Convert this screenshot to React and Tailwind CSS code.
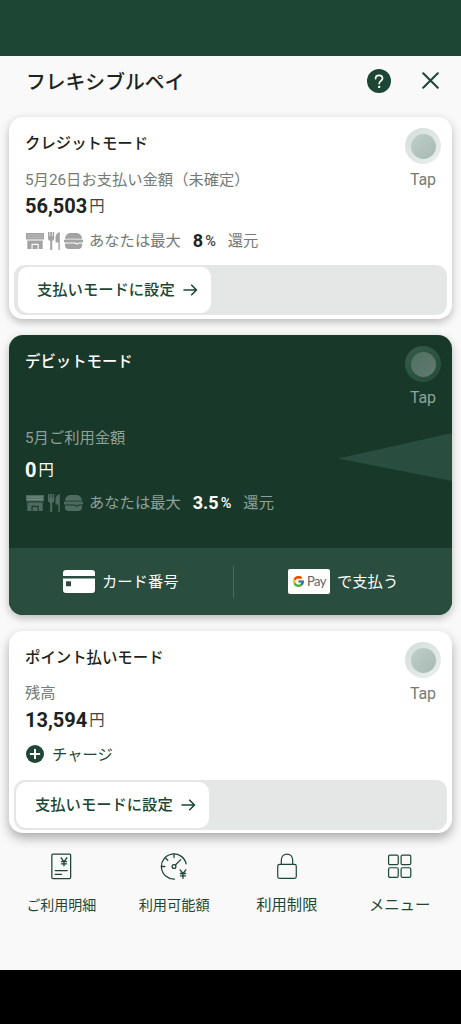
import { FcGoogle } from 'react-icons/fc';
import clsx from 'clsx';

const StoreIcon = () => (
  <svg width="18" height="16" viewBox="0 0 18 16" fill="currentColor">
    <path d="M0 0h18v6.500H0z"/>
    <path d="M1 2.100h16M1 4.400h16" stroke="white" strokeOpacity="0.300" strokeWidth="0.900"/>
    <path d="M1.300 7.500h15.400V16h-4v-5.200H5.500V16H1.300z"/>
    <path d="M6.600 12h5V16h-5z"/>
  </svg>
);

const CutleryIcon = () => (
  <svg width="12" height="18" viewBox="0 0 12 18" fill="currentColor">
    <path d="M0 0h1.500v4h.7V0h1.800v4h.7V0h1.500v6c0 1.700-.8 2.600-2 3V18H2.200V9C.9 8.600 0 7.700 0 6z"/>
    <path d="M11.800 0v18h-1.400v-7.500H7.500V5.500C7.500 2.500 9.500.5 11.800 0z"/>
  </svg>
);

const BurgerIcon = () => (
  <svg width="19" height="16" viewBox="0 0 19 16" fill="currentColor">
    <path d="M1 5.800C1 2.500 3.500 0 6.500 0h6C15.500 0 18 2.500 18 5.800z"/>
    <path d="M1.300 6.500h16.400a1.300 1.300 0 0 1 0 3h-3l-1.700 1-1.700-1h-10a1.300 1.300 0 0 1 0-3z"/>
    <path d="M1 10.500h9.700l2.300 1.300 2.300-1.300H18v2c0 2-1.500 3.500-3.500 3.500h-10C2.500 16 1 14.500 1 12.500z"/>
  </svg>
);

const HelpIcon = () => (
  <svg width="24" height="24" viewBox="0 0 24 24" fill="none">
    <circle cx="12" cy="12" r="12" fill="#1d4734"/>
    <path d="M8.600 9.600C8.600 7.500 10 6.300 12 6.300s3.500 1.200 3.500 3.100c0 2.400-3.300 2.700-3.300 5.200" stroke="white" strokeWidth="1.700" strokeLinecap="round"/>
    <circle cx="12.200" cy="17.900" r="1.200" fill="white"/>
  </svg>
);

const CloseIcon = () => (
  <svg width="17" height="17" viewBox="0 0 17 17" fill="none" stroke="#1d4734" strokeWidth="2" strokeLinecap="round">
    <path d="M1.200 1.200l14.600 14.600M15.800 1.200L1.200 15.800"/>
  </svg>
);

const ArrowIcon = () => (
  <svg width="15" height="12" viewBox="0 0 15 12" fill="none" stroke="currentColor" strokeWidth="1.600" strokeLinecap="round" strokeLinejoin="round">
    <path d="M1 6h12.500M8.700 1.200L13.500 6l-4.800 4.800"/>
  </svg>
);

const PlusIcon = () => (
  <svg width="18" height="18" viewBox="0 0 18 18">
    <circle cx="9" cy="9" r="9" fill="#1d4734"/>
    <path d="M9 4.700v8.600M4.700 9h8.600" stroke="white" strokeWidth="2" strokeLinecap="round"/>
  </svg>
);

const CardIcon = () => (
  <svg width="32" height="23" viewBox="0 0 32 23">
    <path d="M3 0h26a3 3 0 0 1 3 3v3H0V3a3 3 0 0 1 3-3z" fill="white"/>
    <path d="M0 8.500h32V20a3 3 0 0 1-3 3H3a3 3 0 0 1-3-3z" fill="white"/>
    <rect x="3" y="11.300" width="5" height="5" rx="0.600" fill="#294d3e"/>
  </svg>
);

const StatementIcon = () => (
  <svg width="28" height="28" viewBox="0 0 28 28" fill="none" stroke="currentColor" strokeWidth="1.300" strokeLinecap="round" strokeLinejoin="round">
    <rect x="4.500" y="1.200" width="19.500" height="25.300" rx="1.200"/>
    <path d="M14.200 5l2.900 4.200L20 5M17.100 9.200v4M14.500 9h5.200M14.500 11.200h5.200" strokeWidth="1.400"/>
    <path d="M8 18.200h12.500M8 22.200h6.500"/>
  </svg>
);

const LimitIcon = () => (
  <svg width="28" height="28" viewBox="0 0 28 28" fill="none" stroke="currentColor" strokeWidth="1.300" strokeLinecap="round" strokeLinejoin="round">
    <path d="M14.500 27A13 13 0 1 1 26.600 11.200"/>
    <path d="M14 1.200v3.500M1 14h3.500M5.200 5.200l2.300 2.300M15.500 12.400l5.500-5.500"/>
    <circle cx="14" cy="14" r="2"/>
    <path d="M20.400 17.500l2.900 3.900 2.900-3.900M23.300 21.400v4.800M20.700 21.300h5.200M20.700 23.700h5.200" strokeWidth="1.400"/>
  </svg>
);

const LockIcon = () => (
  <svg width="28" height="28" viewBox="0 0 28 28" fill="none" stroke="currentColor" strokeWidth="1.300">
    <rect x="4" y="12.300" width="20" height="15" rx="2"/>
    <path d="M7.900 12.300V7.200a6.100 6.100 0 0 1 12.200 0v5.100"/>
  </svg>
);

const MenuIcon = () => (
  <svg width="28" height="28" viewBox="0 0 28 28" fill="none" stroke="currentColor" strokeWidth="1.300">
    <rect x="1.700" y="2.200" width="10.400" height="10.400" rx="1.500"/>
    <rect x="15.200" y="2.200" width="10.400" height="10.400" rx="1.500"/>
    <rect x="1.700" y="15.900" width="10.400" height="10.400" rx="1.500"/>
    <rect x="15.200" y="15.900" width="10.400" height="10.400" rx="1.500"/>
  </svg>
);

const navItems = [
  { label: 'ご利用明細', icon: StatementIcon, className: 'mt-[13px] text-[14px]' },
  { label: '利用可能額', icon: LimitIcon, className: 'mt-[13px] text-[14.200px]' },
  { label: '利用制限', icon: LockIcon, className: 'mt-[14px] text-[15.300px]' },
  { label: 'メニュー', icon: MenuIcon, className: 'mt-[14px] text-[15.300px]' },
];

function TapButton({ dark }) {
  return (
    <button type="button" className="absolute top-[11px] right-[11px] w-9 flex flex-col items-center">
      <span className={clsx('size-9 rounded-full flex items-center justify-center bg-linear-to-br', dark ? 'from-[#365b4b] to-[#244a3a]' : 'from-[#d3dedb] to-[#eaefed]')}>
        <span className={clsx('size-[25px] rounded-full bg-linear-to-br', dark ? 'from-[#4e7262] to-[#63796f]' : 'from-[#c0cfca] to-[#a6b9b3]')}/>
      </span>
      <span className={clsx('mt-[6px] text-[16px] leading-5 tracking-[-0.2px]', dark ? 'text-[#8fa198]' : 'text-[#727b77]')}>Tap</span>
    </button>
  );
}

function Amount({ value, dark }) {
  return (
    <div className="flex items-center h-7">
      <span className={clsx('text-[20px] leading-7 font-bold', dark ? 'text-white' : 'text-[#1b2421]')}>{value}</span>
      <span className={clsx('ml-[2px] text-[15.300px] leading-7', dark ? 'text-white' : 'text-[#3d4643]')}>円</span>
    </div>
  );
}

function Reward({ rate, dark }) {
  return (
    <div className="flex items-center h-6 text-[15.300px] leading-6">
      <div className={clsx('flex items-center gap-1 w-[64px] pl-px shrink-0', dark ? 'text-[#4d6c5f]' : 'text-[#a3a3a3]')}>
        <span className="shrink-0"><StoreIcon/></span>
        <span className="shrink-0"><CutleryIcon/></span>
        <span className="shrink-0"><BurgerIcon/></span>
      </div>
      <span className={dark ? 'text-[#8fa198]' : 'text-[#727b77]'}>あなたは最大</span>
      <span className={clsx('ml-3 text-[18px] font-bold', dark ? 'text-white' : 'text-[#1b2421]')}>{rate}</span>
      <span className={clsx('ml-[2px] mt-px text-[14.500px] font-medium', dark ? 'text-white' : 'text-[#3d4643]')}>%</span>
      <span className={clsx('ml-3', dark ? 'text-[#8fa198]' : 'text-[#727b77]')}>還元</span>
    </div>
  );
}

function ModeSlider({ className }) {
  return (
    <div className={clsx('mx-[5px] h-[50px] rounded-[11px] bg-[#e4e7e6] flex items-center', className)}>
      <button type="button" className="w-[193px] h-[46px] rounded-[10px] bg-white flex items-center pl-[19px] text-[#1d4734] text-[15.300px] font-medium whitespace-nowrap">
        <span className="mr-2 mt-px">支払いモードに設定</span>
        <ArrowIcon/>
      </button>
    </div>
  );
}

export default function App() {
  return (
    <div className="w-[461px] h-[1024px] overflow-hidden flex flex-col bg-[#f9f9f9] font-[Roboto,'Noto_Sans_CJK_JP',sans-serif]">
      <div className="h-14 shrink-0 bg-[#1d4734]"/>
      <header className="h-[61px] shrink-0 flex items-start pt-[10px] pl-[26px] pr-[22px] text-[#1b2421]">
        <h1 className="flex-1 mt-[2px] text-[19.800px] leading-[30px] font-medium">フレキシブルペイ</h1>
        <button type="button" className="mt-[3px] mr-[31px]"><HelpIcon/></button>
        <button type="button" className="mt-[6px]"><CloseIcon/></button>
      </header>

      <main className="px-[9px] flex flex-col gap-4 shrink-0">
        <section className="relative h-[202px] rounded-[14px] bg-white shadow-[0_3px_9px_rgba(0,0,0,0.26)] flex flex-col">
          <div className="px-4 pt-[15px]">
            <h2 className="text-[15.400px] leading-6 font-medium text-[#1b2421]">クレジットモード</h2>
            <p className="mt-3 text-[15.300px] leading-6 text-[#727b77]">5月26日お支払い金額（未確定）</p>
            <div><Amount value="56,503"/></div>
            <div className="mt-[9px]"><Reward rate="8"/></div>
          </div>
          <ModeSlider className="mt-3 pl-1"/>
          <TapButton/>
        </section>

        <section className="relative h-[280px] rounded-[14px] bg-[#183829] shadow-[0_3px_9px_rgba(0,0,0,0.26)] flex flex-col">
          <svg className="absolute right-0 top-[97px]" width="114" height="49" viewBox="0 0 114 49">
            <path d="M0 26.500L114 1v48z" fill="#294d3e"/>
          </svg>
          <div className="relative px-4 pt-[15px] flex-1">
            <h2 className="text-[15.400px] leading-6 font-medium text-white">デビットモード</h2>
            <p className="mt-[52px] text-[15.300px] leading-6 text-[#8fa198]">5月ご利用金額</p>
            <div className="mt-[6px]"><Amount value="0" dark/></div>
            <div className="mt-[7px]"><Reward rate="3.5" dark/></div>
          </div>
          <div className="h-[67px] rounded-b-[14px] bg-[#294d3e] flex items-center text-white text-[15.300px]">
            <button type="button" className="w-[224px] pl-[54px] flex items-center">
              <CardIcon/>
              <span className="ml-[7px] mt-px">カード番号</span>
            </button>
            <span className="w-px h-8 bg-[#4a6b5d]"/>
            <button type="button" className="flex-1 pl-[54px] flex items-center">
              <span className="w-[42px] h-[25px] rounded-[2px] bg-white flex items-center justify-center text-[#5f6368] text-[13px] leading-none tracking-[-0.6px] font-[Lato,sans-serif]">
                <FcGoogle size={13}/>
                <span className="ml-[2px]">Pay</span>
              </span>
              <span className="ml-[7px] mt-px">で支払う</span>
            </button>
          </div>
          <TapButton dark/>
        </section>

        <section className="relative h-[202px] rounded-[14px] bg-white shadow-[0_5px_11px_rgba(0,0,0,0.32)] flex flex-col">
          <div className="px-4 pt-[15px]">
            <h2 className="text-[15.400px] leading-6 font-medium text-[#1b2421]">ポイント払いモード</h2>
            <p className="mt-[11px] text-[15.300px] leading-6 text-[#727b77]">残高</p>
            <div className="mt-px"><Amount value="13,594"/></div>
            <button type="button" className="mt-2 h-6 pl-[1px] flex items-center text-[15.300px] text-[#1d4734]">
              <PlusIcon/>
              <span className="ml-2 mt-[2px]">チャージ</span>
            </button>
          </div>
          <ModeSlider className="mt-[14px] pl-[2px]"/>
          <TapButton/>
        </section>
      </main>

      <nav className="flex-1 px-[5px] pt-5 grid grid-cols-4 text-[#1d4734]">
        {
          navItems.map(({ label, icon: Icon, className }) => (
            <button type="button" key={label} className="h-16 flex flex-col items-center">
              <Icon/>
              <span className={clsx('leading-6 whitespace-nowrap', className)}>{label}</span>
            </button>
          ))
        }
      </nav>
      <div className="h-[54px] shrink-0 bg-black"/>
    </div>
  );
}
